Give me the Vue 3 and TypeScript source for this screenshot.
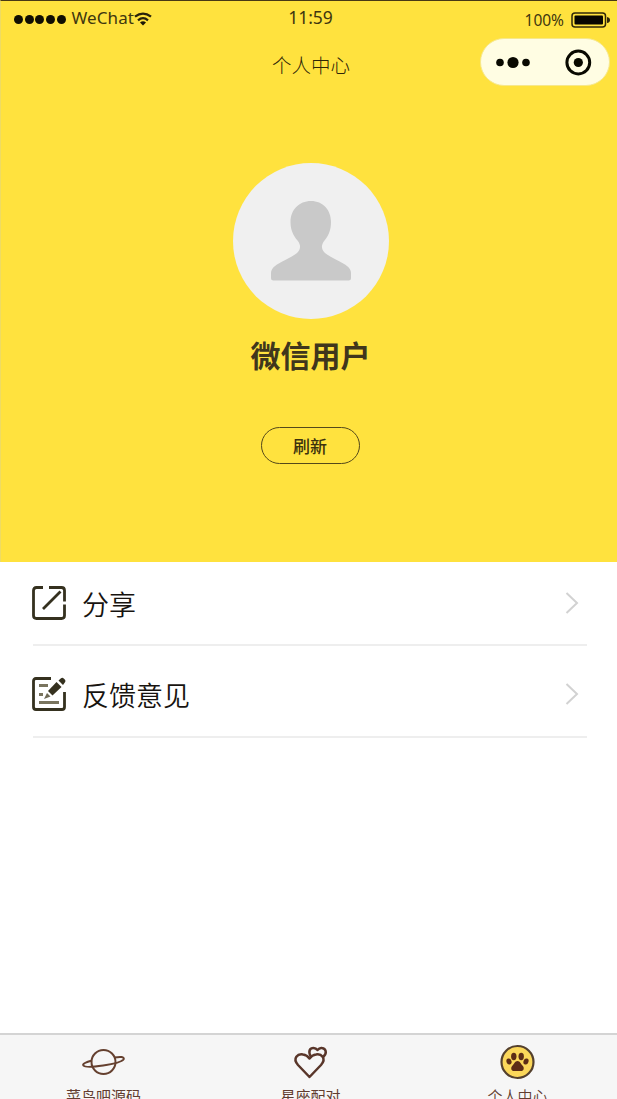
<script setup lang="ts">
interface MenuItem { id: 'share' | 'feedback'; label: string }
interface TabItem { id: 'planet' | 'hearts' | 'paw'; label: string }

const menu: MenuItem[] = [
  { id: 'share', label: '分享' },
  { id: 'feedback', label: '反馈意见' },
]
const tabs: TabItem[] = [
  { id: 'planet', label: '菜鸟吧源码' },
  { id: 'hearts', label: '星座配对' },
  { id: 'paw', label: '个人中心' },
]
</script>

<template>
  <main class="phone">
    <section class="hero">
      <div class="status">
        <div class="carrier">
          <i v-for="n in 5" :key="n" class="signal"></i>
          <span class="network">WeChat</span>
          <svg class="wifi" width="18" height="14" viewBox="0 0 18 14" fill="none" stroke="#29220b" stroke-width="2.300">
            <path d="M1 4.700Q9-1.500 17 4.700M4 8.300Q9 4 14 8.300" />
            <path d="M6 10.500Q9 8 12 10.500L9 13.500Z" fill="#1b1707" stroke="none" />
          </svg>
        </div>
        <time class="time">11:59</time>
        <div class="power">
          <span class="percent">100%</span>
          <svg width="40" height="16" viewBox="0 0 40 16">
            <rect x="1" y="1" width="33.5" height="14" rx="3" fill="none" stroke="#302809" stroke-width="1.5" />
            <rect x="3.5" y="3.5" width="28.5" height="9" rx="1" fill="#080700" />
            <path d="M36 5Q39 5.5 39 8T36 11Z" fill="#302809" />
          </svg>
        </div>
      </div>
      <div class="navbar">
        <h1 class="title">个人中心</h1>
        <div class="capsule">
          <svg width="128" height="46" viewBox="0 0 128 46" fill="#090900">
            <circle cx="19" cy="23.5" r="3.8" /><circle cx="32" cy="23.5" r="5.6" /><circle cx="45" cy="23.5" r="3.8" />
            <circle cx="97.3" cy="23.5" r="11.4" fill="none" stroke="#090900" stroke-width="3" />
            <circle cx="97.3" cy="23.5" r="4.6" />
          </svg>
        </div>
      </div>
      <div class="profile">
        <div class="avatar">
          <svg width="156" height="156" viewBox="0 0 156 156">
            <path fill="#c9c9c9" d="M78 38C66 38 57.500 47 57.500 59C57.500 67 60.500 73 64.500 77.500C68 82 68 86 64 90C58 95 51 97 44 101.500Q38 105.500 38 110V115Q38 117.500 40.500 117.500H115.500Q118 117.500 118 115V110Q118 105.500 112 101.500C105 97 98 95 92 90C88 86 88 82 91.500 77.500C95.500 73 98 67 98 59C98 47 90 38 78 38Z" />
          </svg>
        </div>
        <h2 class="name">微信用户</h2>
        <button class="refresh" type="button">刷新</button>
      </div>
    </section>

    <nav class="menu">
      <a v-for="item in menu" :key="item.id" class="row">
        <svg v-if="item.id === 'share'" class="row-icon" width="34" height="34" viewBox="0 0 34 34" fill="none" stroke="#35311f" stroke-width="2.800">
          <path d="M11 1.500H4.500Q1.500 1.500 1.500 4.500V29.500Q1.500 32.500 4.500 32.500H29.500Q32.500 32.500 32.500 29.500V18.500M17 1.500H29.500Q32.500 1.500 32.500 4.500V15.500M11 23L28.500 5.500" />
        </svg>
        <svg v-else class="row-icon" width="34" height="34" viewBox="0 0 34 34" fill="none" stroke="#35311f" stroke-width="2.800">
          <path d="M19 1.500H4Q1.500 1.500 1.500 4V30Q1.500 32.500 4 32.500H30Q32.500 32.500 32.500 30V15" />
          <path d="M7 8.500H16M7 17.500H11M7 25.500H27" stroke="#79745e" />
          <path d="M16 14L24.500 5L29.500 10L20.500 18.500Z" fill="#35311f" stroke="none" />
          <path d="M15 16L18.500 19.500L12 22Z" fill="#6f6a56" stroke="none" />
          <path d="M26.500 3.500L29 1.200Q30.500 .2 32 1.700L33 2.800Q34 4 33 5.300L31 8Z" fill="#35311f" stroke="none" />
        </svg>
        <span class="row-label">{{ item.label }}</span>
        <svg class="chevron" width="14" height="24" viewBox="0 0 14 24" fill="none" stroke="#d2d2d2" stroke-width="2">
          <path d="M1.500 2L12 12L1.500 22" />
        </svg>
      </a>
    </nav>

    <footer class="tabs">
      <a v-for="tab in tabs" :key="tab.id" class="tab" :class="tab.id">
        <svg v-if="tab.id === 'planet'" width="44" height="36" viewBox="0 0 44 36" fill="none" stroke="#65402f" stroke-width="2">
          <circle cx="21.500" cy="18" r="12" />
          <path d="M10 16.500C4 18 0 20 1.500 21.500C4 25 38 20 41.500 15.500C43 12.500 38 12.500 32.500 13.500" />
        </svg>
        <svg v-else-if="tab.id === 'hearts'" width="44" height="36" viewBox="0 0 44 36" fill="none" stroke="#59362a" stroke-width="2.500" stroke-linejoin="round">
          <path d="M20.500 33L9 21C3 14 9 9.500 14 10.500Q18 11 20.500 14.500Q23 11 27 10.500C32 9.500 38 14 32 21Z" />
          <path d="M21.500 12C19 7 21 4 24.500 4Q27 4 28.500 6Q30.500 3.500 33 4C37 4.500 38 9 35 12L33.500 13.500" />
        </svg>
        <svg v-else width="44" height="36" viewBox="0 0 44 36">
          <circle cx="21.500" cy="18" r="16" fill="#fbd75a" stroke="#54402d" stroke-width="2.200" />
          <g fill="#5c2c16">
            <ellipse cx="17.800" cy="12.500" rx="2.700" ry="3.700" /><ellipse cx="25.200" cy="12.500" rx="2.700" ry="3.700" />
            <ellipse cx="13" cy="17.500" rx="2.500" ry="3.100" transform="rotate(-20 13 17.500)" />
            <ellipse cx="30" cy="17.500" rx="2.500" ry="3.100" transform="rotate(20 30 17.500)" />
            <path d="M21.500 17C19 17 18 20 16.500 21.500C14 24 15.500 27.500 18.500 27H24.500C27.500 27.500 29 24 26.500 21.500C25 20 24 17 21.500 17Z" />
          </g>
        </svg>
        <span class="tab-label">{{ tab.label }}</span>
      </a>
    </footer>
  </main>
</template>

<style>
body { margin: 0; overflow: hidden; }
</style>

<style scoped>
.phone { box-sizing: border-box; width: 617px; height: 1099px; overflow: hidden; display: flex; flex-direction: column; background: #fff; font-family: "Noto Sans", "Noto Sans CJK SC", sans-serif; }
.hero { box-sizing: border-box; height: 562px; flex: none; background: #ffe23e; border-top: 1px solid #493914; border-left: 1px solid #eedb64; }
.status { height: 37px; display: grid; grid-template-columns: 1fr 60px 1fr; align-items: center; color: #40360f; font-size: 17px; line-height: 24px; }
.carrier { display: flex; align-items: center; padding-left: 13px; }
.signal { width: 9px; height: 9px; margin-right: 1.700px; border-radius: 50%; background: #100e02; }
.network { margin: -4px 0 0 4px; width: 62px; letter-spacing: .1px; }
.wifi { margin: -2px 0 0 1px; }
.time { text-align: center; padding-left: 3px; margin-top: -5px; font-size: 17.500px; }
.power { display: flex; justify-content: flex-end; align-items: center; gap: 7px; padding-right: 6px; font-size: 15.500px; }
.navbar { height: 48px; display: grid; grid-template-columns: 1fr 120px 1fr; }
.title { grid-column: 2; margin: 0; padding-left: 4px; text-align: center; font-size: 19.500px; line-height: 55px; font-weight: 300; color: #2e2608; white-space: nowrap; }
.capsule { grid-column: 3; justify-self: end; box-sizing: border-box; width: 130px; height: 48px; margin-right: 7px; border: 1px solid #f7e88b; border-radius: 24px; background: #fffde3; }
.capsule svg { display: block; }
.profile { display: flex; flex-direction: column; align-items: center; padding: 77px 0 0 3px; }
.avatar { width: 156px; height: 156px; border-radius: 50%; background: #f0f0f0; }
.avatar svg { display: block; }
.name { margin: 15px 0 0; font-size: 30px; line-height: 44px; font-weight: 700; color: #40361c; }
.refresh { box-sizing: border-box; width: 99px; height: 37px; margin: 49px 1px 0 0; padding: 0; border: 1px solid #54481a; border-radius: 19px; background: transparent; color: #3b310d; font: 500 17px/36px "Noto Sans CJK SC", sans-serif; }
.menu { flex: 1; display: flex; flex-direction: column; padding: 0 30px 0 33px; }
.row { box-sizing: border-box; height: 92px; display: flex; align-items: center; border-bottom: 2px solid #eee; }
.row:first-child { height: 84px; }
.row-icon { flex: none; margin-left: -1px; }
.row:last-child .row-icon, .row:last-child .chevron { margin-top: 6px; }
.row-label { flex: 1; padding: 3px 0 0 16px; font-size: 27px; line-height: 40px; font-weight: 350; color: #17130f; }
.row:last-child .row-label { padding-top: 10px; }
.chevron { margin-right: 8px; }
.tabs { box-sizing: border-box; height: 66px; flex: none; display: grid; grid-template-columns: 207px 207px 207px; overflow: hidden; border-top: 2px solid #d4d4d4; background: #f6f6f6; }
.tab { display: flex; flex-direction: column; align-items: center; padding-top: 9px; color: #623d30; }
.tab svg { flex: none; }
.tab-label { margin-top: 5px; font-size: 15px; line-height: 22px; white-space: nowrap; }
.paw .tab-label { font-weight: 350; }
</style>
